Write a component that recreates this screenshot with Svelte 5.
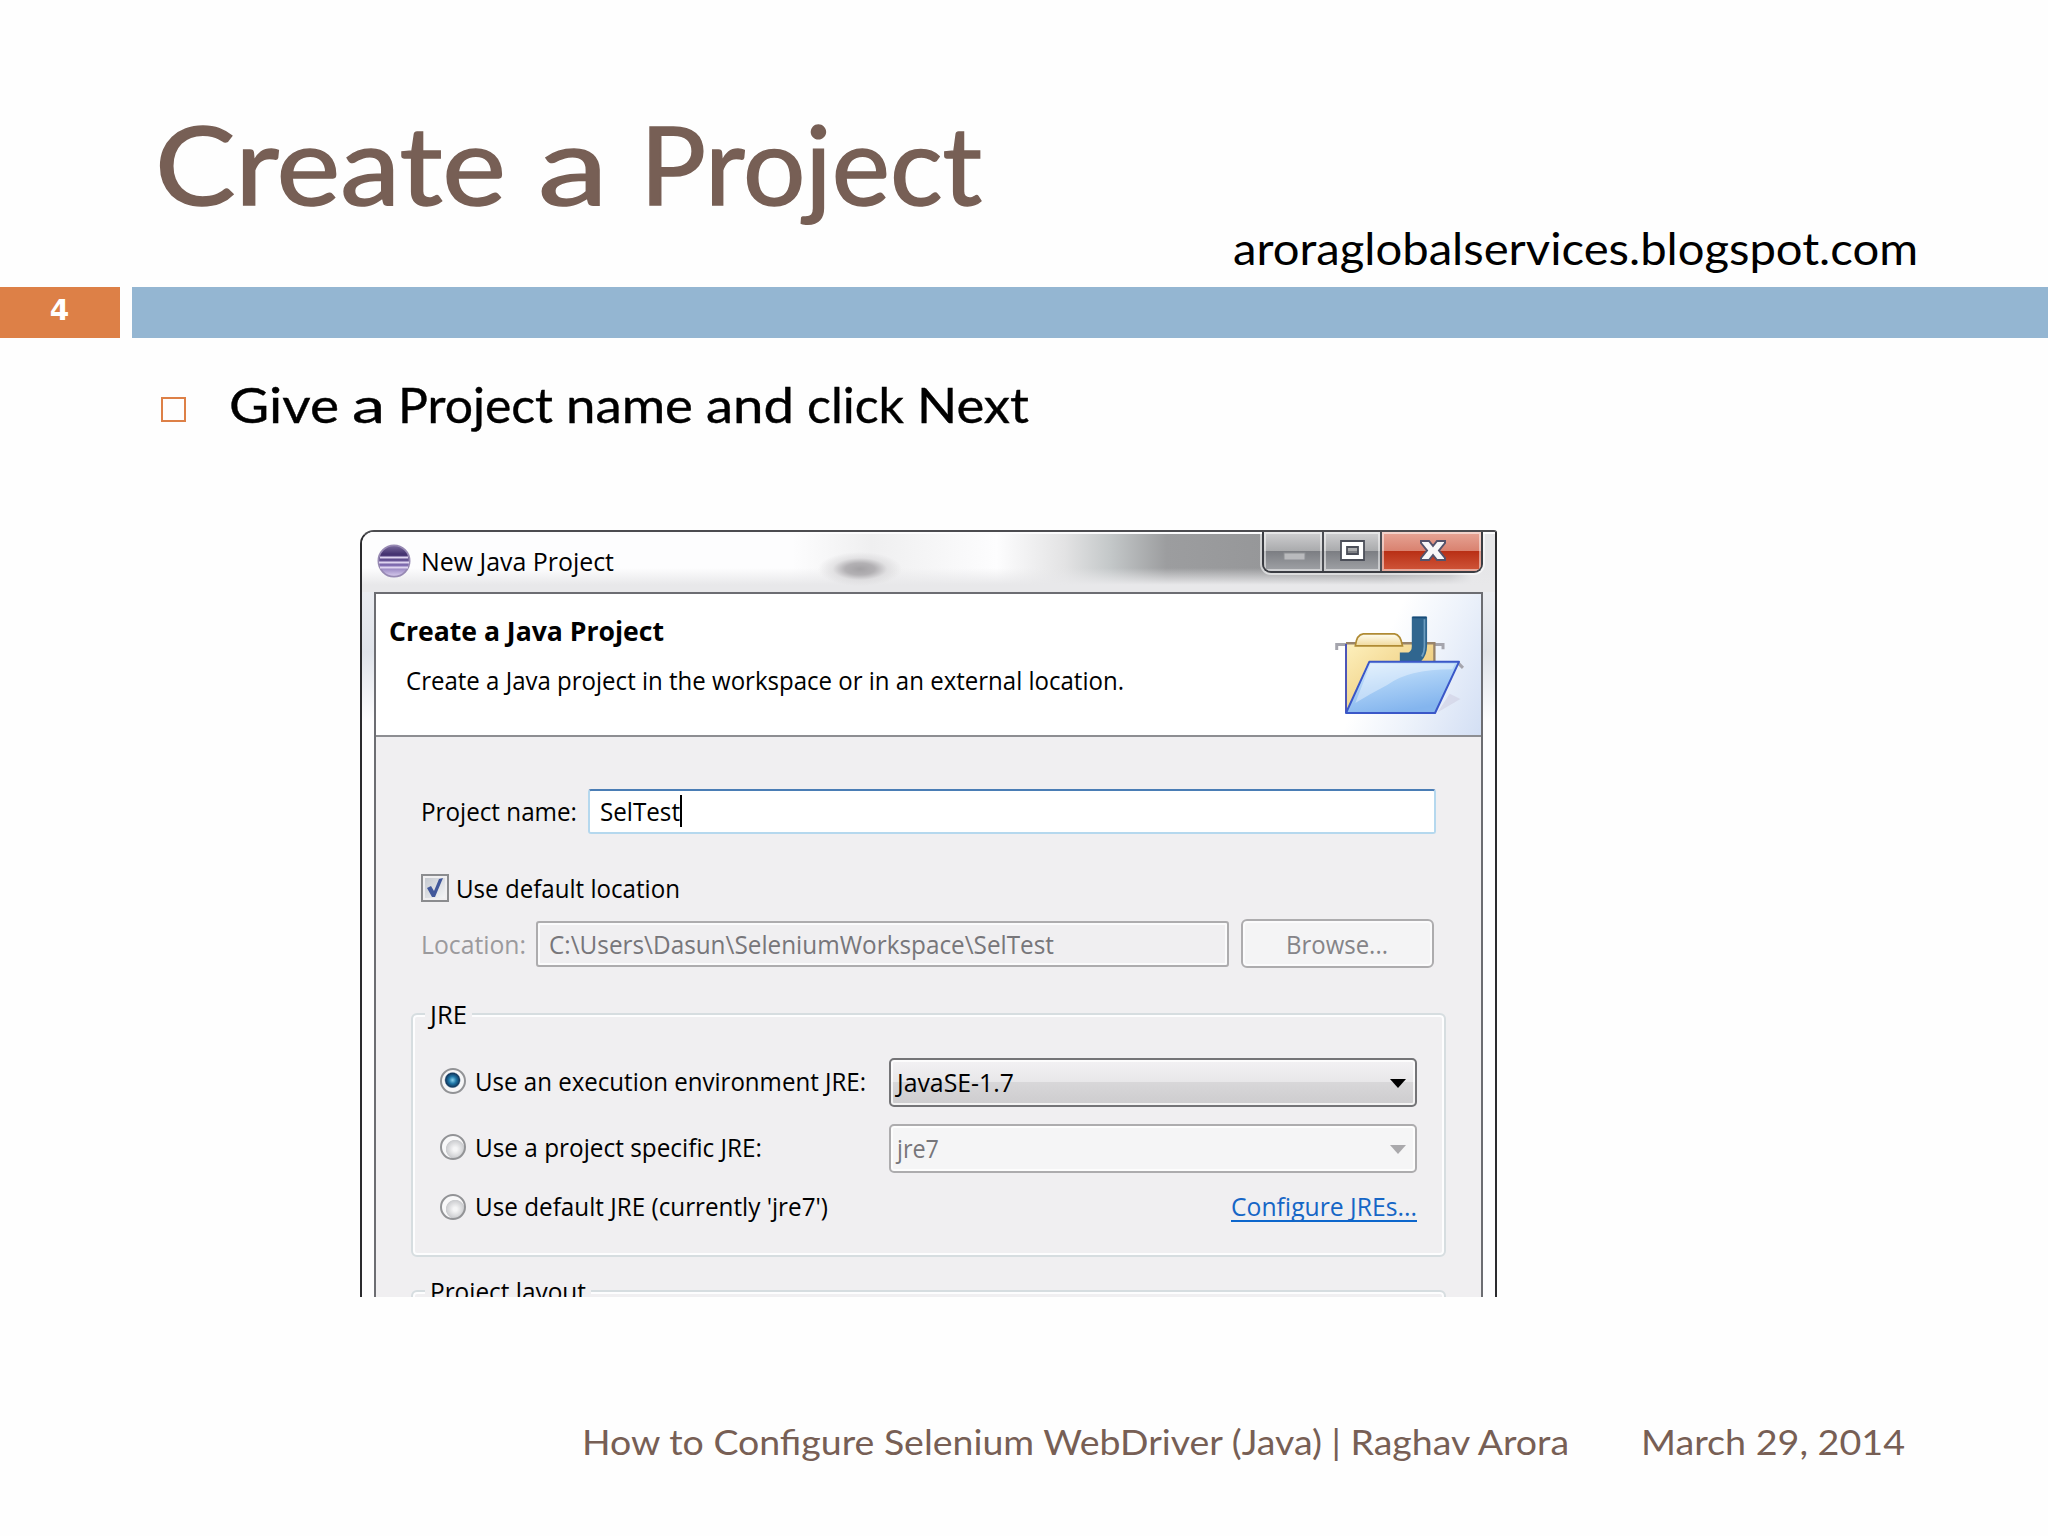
<script lang="ts">
  type Word = [text: string, width: number];

  type JreOption = {
    label: string;
    labelWidth: number;
    value?: string;
    valueWidth?: number;
  };

  const title: Word[] = [['Create', 351], ['a', 70], ['Project', 342]];

  const point: Word[] = [
    ['Give', 110],
    ['a', 33],
    ['Project', 155],
    ['name', 127],
    ['and', 88],
    ['click', 97],
    ['Next', 112],
  ];

  const jreOptions: JreOption[] = [
    { label: 'Use an execution environment JRE:', labelWidth: 391, value: 'JavaSE-1.7', valueWidth: 117 },
    { label: 'Use a project specific JRE:', labelWidth: 287, value: 'jre7', valueWidth: 42 },
    { label: "Use default JRE (currently 'jre7')", labelWidth: 353 },
  ];

  let selected = $state(0);

  // Squeezes or stretches a line of text to a given width.
  function fit(node: HTMLElement, width: number) {
    const natural = node.getBoundingClientRect().width;
    node.style.transform = `scaleX(${width / natural})`;
    node.style.marginRight = `${width - natural}px`;
  }
</script>

<main class="slide">
  <header class="slide-head">
    <h1 class="slide-title">
      {#each title as [text, width]}
        <span class="fit" use:fit={width}>{text}</span>
      {/each}
    </h1>
    <p class="site"><span class="fit" use:fit={685}>aroraglobalservices.blogspot.com</span></p>
  </header>

  <div class="band">
    <div class="band-number">4</div>
    <div class="band-fill"></div>
  </div>

  <ul class="points">
    <li class="point">
      <span class="bullet"></span>
      <div class="point-text">
        {#each point as [text, width]}
          <span class="fit" use:fit={width}>{text}</span>
        {/each}
      </div>
    </li>
  </ul>

  <section class="dialog">
    <div class="titlebar">
      <svg class="app-icon" viewBox="0 0 34 34">
        <defs>
          <linearGradient id="orb" x1="0" y1="0" x2="0" y2="1">
            <stop offset="0" stop-color="#7c6c9f" />
            <stop offset="0.28" stop-color="#43316f" />
            <stop offset="0.65" stop-color="#8470b4" />
            <stop offset="1" stop-color="#d9cdee" />
          </linearGradient>
        </defs>
        <circle cx="17" cy="17" r="15.6" fill="url(#orb)" stroke="#9789b3" stroke-width="1.8" />
        <path d="M3 13.500h28M2 18.500h30M3 23.500h28" stroke="#ded4f0" stroke-width="2" />
      </svg>
      <span class="caption"><span class="fit" use:fit={193}>New Java Project</span></span>
      <div class="window-buttons">
        <span class="window-button minimize">
          <svg viewBox="0 0 58 38"><rect x="20" y="21" width="21" height="7" fill="#b9babd" stroke="#8d8f94" /></svg>
        </span>
        <span class="window-button maximize">
          <svg viewBox="0 0 56 38">
            <path d="M17 9h23v19H17zM23 15v7h11v-7z" fill="#fff" fill-rule="evenodd" stroke="#4b4e58" stroke-width="1.8" />
          </svg>
        </span>
        <span class="window-button close">
          <svg viewBox="0 0 98 38">
            <path
              d="M39 9h8l4 5 4-5h8v2l-6 7.500 6 7.500v2h-8l-4-5-4 5h-8v-2l6-7.500-6-7.500z"
              fill="#f7f7f8"
              stroke="#54536b"
              stroke-width="2"
            />
          </svg>
        </span>
      </div>
    </div>

    <div class="client">
      <div class="banner">
        <div class="banner-text">
          <h2><span class="fit" use:fit={275}>Create a Java Project</span></h2>
          <p><span class="fit" use:fit={718}>Create a Java project in the workspace or in an external location.</span></p>
        </div>
        <svg class="folder" viewBox="400 280 400 310">
          <defs>
            <linearGradient id="back" x1="0" y1="0" x2="1" y2="1">
              <stop offset="0" stop-color="#fdf0bd" />
              <stop offset="1" stop-color="#e8bd62" />
            </linearGradient>
            <linearGradient id="front" x1="0" y1="0" x2="0.4" y2="1">
              <stop offset="0" stop-color="#d9ecfd" />
              <stop offset="0.5" stop-color="#a9cff6" />
              <stop offset="1" stop-color="#84b5ee" />
            </linearGradient>
            <linearGradient id="tab" x1="0" y1="0" x2="0" y2="1">
              <stop offset="0" stop-color="#fffdf0" />
              <stop offset="1" stop-color="#f0d99c" />
            </linearGradient>
          </defs>
          <path d="M712 576L748 520 780 536z" fill="#cbc9dd" opacity="0.5" />
          <path d="M408 388V372H436M700 372H728V386M474 442L484 430H500M774 428L788 442" fill="none" stroke="#a5a5ad" stroke-width="9" />
          <path d="M436 368H702V430H500L438 574z" fill="url(#back)" />
          <path d="M436 368H702V424" fill="none" stroke="#98836a" stroke-width="7" />
          <path d="M464 376Q468 342 488 340H582Q600 342 606 376z" fill="url(#tab)" stroke="#b08b34" stroke-width="5" />
          <path d="M634 288H680V376Q680 404 662 422H598V396H624Q634 392 634 378z" fill="#30668f" />
          <path d="M636 290H678" stroke="#164b78" stroke-width="5" />
          <path d="M672 296V378Q672 396 664 408" fill="none" stroke="#6d9dbf" stroke-width="5" />
          <path d="M436 370V578" stroke="#4c55b8" stroke-width="6" />
          <path d="M506 424H776L704 578H436z" fill="url(#front)" stroke="#3a57c8" stroke-width="6" stroke-linejoin="round" />
          <path d="M510 430H764L756 446Q620 446 560 494 510 520 464 548z" fill="#fff" opacity="0.38" />
        </svg>
      </div>

      <div class="form">
        <div class="row name-row">
          <label for="project-name"><span class="fit" use:fit={156}>Project name:</span></label>
          <div class="field name-field" id="project-name">
            <span class="fit" use:fit={80}>SelTest</span><span class="caret"></span>
          </div>
        </div>

        <div class="row check-row">
          <span class="checkbox">
            <svg viewBox="0 0 20 20"><path d="M2 10l4-2 3 5 5-12 4-1-8 19H7z" fill="#42589b" /></svg>
          </span>
          <span class="fit" use:fit={224}>Use default location</span>
        </div>

        <div class="row location-row">
          <span class="location-label"><span class="fit" use:fit={105}>Location:</span></span>
          <div class="field location-field">
            <span class="fit" use:fit={505}>C:\Users\Dasun\SeleniumWorkspace\SelTest</span>
          </div>
          <button class="browse"><span class="fit" use:fit={102}>Browse...</span></button>
        </div>

        <fieldset class="group jre">
          <legend><span class="fit" use:fit={37}>JRE</span></legend>
          {#each jreOptions as option, i}
            <div class="option">
              <button
                class="radio"
                class:checked={selected === i}
                aria-label={option.label}
                onclick={() => (selected = i)}
              ></button>
              <span class="option-label"><span class="fit" use:fit={option.labelWidth}>{option.label}</span></span>
              {#if option.value}
                <div class="select" class:disabled={selected !== i}>
                  <span class="fit" use:fit={option.valueWidth ?? 0}>{option.value}</span>
                  <svg class="arrow" viewBox="0 0 16 9"><path d="M0 0h16L8 9z" fill="currentColor" /></svg>
                </div>
              {:else}
                <span class="configure"><span class="fit" use:fit={186}>Configure JREs...</span></span>
              {/if}
            </div>
          {/each}
        </fieldset>

        <fieldset class="group layout">
          <legend><span class="fit" use:fit={156}>Project layout</span></legend>
        </fieldset>
      </div>
    </div>
  </section>

  <footer class="slide-foot">
    <span class="fit" use:fit={987}>How to Configure Selenium WebDriver (Java) | Raghav Arora</span>
    <span class="fit" use:fit={264}>March 29, 2014</span>
  </footer>
</main>

<style>
  :global(body) {
    margin: 0;
    background: #fefefe;
  }
  .slide {
    display: flex;
    flex-direction: column;
    width: 2048px;
    height: 1536px;
    overflow: hidden;
    background: #fefefe;
    color: #000;
    font-family: Lato, sans-serif;
  }
  .slide * {
    box-sizing: border-box;
  }
  h1,
  h2,
  p {
    margin: 0;
    font-weight: 400;
  }
  .fit {
    display: inline-block;
    flex: none;
    transform-origin: left;
    white-space: pre;
  }
  .slide-head {
    display: flex;
    justify-content: space-between;
    height: 287px;
    padding: 0 130px 0 155px;
  }
  .slide-title {
    display: flex;
    gap: 32px;
    padding-top: 103px;
    color: #775f55;
    font-size: 108px;
    line-height: 120px;
    -webkit-text-stroke: 1.5px #775f55;
  }
  .site {
    padding-top: 223px;
    font-size: 44px;
    line-height: 50px;
  }
  .band {
    display: flex;
    gap: 12px;
    height: 51px;
  }
  .band-number {
    width: 120px;
    padding-right: 1px;
    background: #dd8047;
    color: #fff;
    font: bold 28px/48px 'DejaVu Sans', sans-serif;
    text-align: center;
  }
  .band-fill {
    flex: 1;
    background: #94b6d2;
  }
  .points {
    height: 192px;
    margin: 0;
    padding: 36px 0 0 161px;
    list-style: none;
    font-size: 49px;
    line-height: 60px;
    -webkit-text-stroke: 0.4px #000;
  }
  .point {
    display: flex;
    align-items: center;
  }
  .point-text {
    display: flex;
    gap: 13px;
  }
  .bullet {
    width: 25px;
    height: 25px;
    margin: 11px 43px 0 0;
    border: 2px solid #dd8047;
  }

  .dialog {
    display: flex;
    flex-direction: column;
    width: 1137px;
    height: 767px;
    margin-left: 360px;
    overflow: hidden;
    border: 2px solid #2b2b2e;
    border-top-color: #4c4c50;
    border-bottom: 0;
    border-radius: 14px 3px 0 0;
    background: linear-gradient(#f4f4f6, #dfe3ea 120px, #fdfdfe 190px);
    font-family: 'Open Sans', 'Noto Sans', sans-serif;
    font-size: 26px;
    line-height: 36px;
  }
  .titlebar {
    display: flex;
    flex: none;
    height: 60px;
    padding: 0 12px 0 15px;
    background:
      radial-gradient(42px 17px at 498px 37px, #a3a1a4 0, #b3b1b4 35%, rgba(215, 214, 216, 0.6) 65%, rgba(232, 232, 234, 0) 100%),
      linear-gradient(rgba(238, 238, 240, 0) 60%, #e8e8ea 88%),
      linear-gradient(90deg, #fdfdfe 0 38%, #efeff0 45%, #fdfdfe 56%, #e3e3e4 62%, #c4c8c9 66%, #9c9d9f 71%, #8f9092 90%, #b5b5b8 96%, #e6e6e8 98%);
    box-shadow: inset 0 2px #fcfcfd;
  }
  .app-icon {
    width: 34px;
    height: 34px;
    margin-top: 12px;
  }
  .caption {
    flex: 1;
    padding: 11px 0 0 10px;
  }
  .window-buttons {
    display: flex;
    width: 221px;
    height: 41px;
    overflow: hidden;
    border: 2px solid #3b3d43;
    border-top: 0;
    border-radius: 0 0 9px 9px;
    box-shadow: 0 0 0 2px rgba(255, 255, 255, 0.55);
  }
  .window-button {
    box-shadow: inset 0 0 0 2px rgba(255, 255, 255, 0.5);
    background: linear-gradient(#cfcfd1, #aaabad 48%, #7c7e83 50%, #a0a2a6);
  }
  .window-button svg {
    display: block;
    height: 38px;
  }
  .minimize {
    width: 60px;
    border-right: 2px solid #4b4d53;
  }
  .maximize {
    width: 58px;
    border-right: 2px solid #4b4d53;
  }
  .close {
    flex: 1;
    background: linear-gradient(#e7a596, #d98270 48%, #b93016 50%, #d0563a);
  }

  .client {
    flex: 1;
    margin: 0 12px 0 12px;
    border: 2px solid #6c6d72;
    border-bottom: 0;
    background: #f0eff1;
  }
  .banner {
    display: flex;
    justify-content: space-between;
    height: 143px;
    border-bottom: 2px solid #8d8e92;
    background: linear-gradient(115deg, #fff 88%, #eef3fb 93%, #d3dff4);
  }
  .banner-text {
    padding: 19px 0 0 13px;
  }
  .banner-text h2 {
    font-size: 26px;
    font-weight: 700;
    line-height: 36px;
  }
  .banner-text p {
    margin-top: 13px;
    padding-left: 17px;
  }
  .folder {
    width: 133px;
    height: 103px;
    margin: 20px 14px 0 0;
  }

  .form {
    padding: 51px 35px 0 35px;
  }
  .row {
    display: flex;
    align-items: center;
    padding-left: 10px;
  }
  .field {
    display: flex;
    align-items: center;
    border-radius: 3px;
  }
  .name-row {
    height: 46px;
    padding-right: 10px;
  }
  .name-field {
    flex: 1;
    height: 45px;
    margin-left: 11px;
    padding-left: 10px;
    border: 2px solid #b5d8ee;
    border-top-color: #4a7db5;
    background: #fff;
  }
  .caret {
    width: 2px;
    height: 32px;
    background: #000;
  }
  .check-row {
    height: 28px;
    margin-top: 40px;
  }
  .checkbox {
    width: 28px;
    height: 28px;
    margin-right: 7px;
    padding: 2px;
    border: 2px solid #8b8c8f;
    background: linear-gradient(135deg, #c5c9d0, #f4f5f7) content-box #f8f8f9;
  }
  .checkbox svg {
    display: block;
    width: 20px;
    height: 20px;
  }
  .location-row {
    height: 49px;
    margin-top: 17px;
    padding-right: 12px;
  }
  .location-label {
    color: #9b9a9d;
  }
  .location-field {
    flex: 1;
    height: 46px;
    margin: 0 12px 0 10px;
    padding-left: 11px;
    border: 2px solid #adacae;
    box-shadow: inset 0 0 0 2px #fbfbfc;
    color: #77767a;
  }
  .browse {
    width: 193px;
    height: 49px;
    padding: 0 2px 0 0;
    border: 2px solid #adacae;
    border-radius: 6px;
    background: #f4f4f5;
    box-shadow: inset 0 0 0 2px #fbfbfc;
    color: #858488;
    font: inherit;
  }
  .group {
    min-width: 0;
    margin: 28px 0 0;
    padding: 26px 27px 29px 26px;
    border: 2px solid #d6dde0;
    border-radius: 6px;
    box-shadow: inset 0 0 0 2px #fdfdfe;
  }
  .group legend {
    margin-left: -14px;
    padding: 0 5px;
    background: #f0eff1;
  }
  .layout {
    height: 100px;
    margin-top: 16px;
  }
  .option {
    display: flex;
    align-items: center;
    height: 49px;
  }
  .option + .option {
    margin-top: 17px;
  }
  .option:last-child {
    height: 36px;
    margin-top: 17px;
  }
  .radio {
    flex: none;
    width: 26px;
    height: 26px;
    margin: 0 9px 3px 1px;
    padding: 0;
    border: 2px solid #929396;
    border-radius: 50%;
    background: radial-gradient(circle at 60% 60%, #f5f5f6 10%, #cbcccf 48%, #f8f8f9 52%);
  }
  .radio.checked {
    background: radial-gradient(circle at 48% 46%, #8ad3ee 0, #1f77a8 22%, #12395f 42%, #f6f6f7 50%);
  }
  .option-label {
    flex: 1;
    margin-top: -4px;
  }
  .select {
    display: flex;
    align-items: center;
    justify-content: space-between;
    width: 528px;
    height: 49px;
    padding: 0 9px 1px 6px;
    border: 2px solid #747477;
    border-radius: 5px;
    background: linear-gradient(#f3f2f4, #e8e7e9 48%, #d8d7d9 50%, #cdccce);
    box-shadow: inset 0 0 0 2px rgba(255, 255, 255, 0.75);
  }
  .select.disabled {
    border-color: #adacae;
    background: #f5f5f6;
    color: #77767a;
  }
  .arrow {
    width: 16px;
    height: 9px;
    margin-top: 3px;
  }
  .select.disabled .arrow {
    color: #aaa9ac;
  }
  .configure {
    height: 30px;
    margin-top: -2px;
    border-bottom: 2px solid #0d66cc;
    color: #1666c6;
    line-height: 28px;
  }

  .slide-foot {
    display: flex;
    gap: 72px;
    padding: 120px 0 0 582px;
    color: #775f55;
    font-size: 35px;
    line-height: 48px;
  }
</style>
